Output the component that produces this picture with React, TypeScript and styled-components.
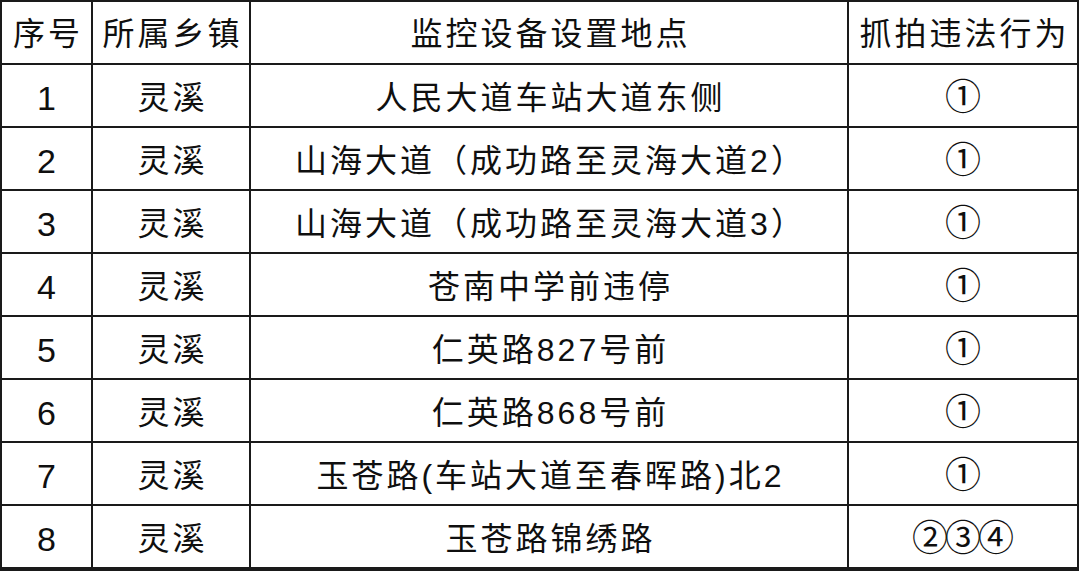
import React from 'react';
import styled, { createGlobalStyle } from 'styled-components';

const GlobalStyle = createGlobalStyle`
  html, body {
    margin: 0;
    padding: 0;
    background: #ffffff;
  }
  body {
    font-family: "Liberation Sans", "Noto Sans CJK SC", sans-serif;
    color: #0f0f0f;
  }
`;

const Table_ = styled.div`
  display: grid;
  grid-template-columns: 89px 156px 596px 228px;
  grid-auto-rows: 61px;
  gap: 2px;
  width: 1079px;
  padding: 2px 2px 4px 2px;
  box-sizing: border-box;
  background: #1a1a1a;
`;

type Kind = 'head' | 'num' | 'text' | 'mark';

const Cell_ = styled.div<{ $kind: Kind }>`
  display: flex;
  align-items: center;
  justify-content: center;
  background: #ffffff;
  font-size: ${(p) => (p.$kind === 'num' ? '34px' : p.$kind === 'mark' ? '36px' : '32px')};
  letter-spacing: ${(p) => (p.$kind === 'num' ? '0' : p.$kind === 'mark' ? '-3px' : '3px')};
  text-indent: ${(p) => (p.$kind === 'num' ? '0' : p.$kind === 'mark' ? '-3px' : '3px')};
  padding-top: ${(p) => (p.$kind === 'head' ? '2px' : p.$kind === 'mark' ? '4px' : '5px')};
  box-sizing: border-box;
  white-space: nowrap;
  line-height: 1;
`;

const headers = ['序号', '所属乡镇', '监控设备设置地点', '抓拍违法行为'];

const rows: [string, string, string, string][] = [
  ['1', '灵溪', '人民大道车站大道东侧', '①'],
  ['2', '灵溪', '山海大道（成功路至灵海大道2）', '①'],
  ['3', '灵溪', '山海大道（成功路至灵海大道3）', '①'],
  ['4', '灵溪', '苍南中学前违停', '①'],
  ['5', '灵溪', '仁英路827号前', '①'],
  ['6', '灵溪', '仁英路868号前', '①'],
  ['7', '灵溪', '玉苍路(车站大道至春晖路)北2', '①'],
  ['8', '灵溪', '玉苍路锦绣路', '②③④'],
];

const kinds: Kind[] = ['num', 'text', 'text', 'mark'];

const App = () => (
  <>
    <GlobalStyle />
    <Table_>
      {headers.map((h) => (
        <Cell_ key={h} $kind="head">
          {h}
        </Cell_>
      ))}
      {rows.map((r) =>
        r.map((c, i) => (
          <Cell_ key={r[0] + '-' + i} $kind={kinds[i]}>
            {c}
          </Cell_>
        ))
      )}
    </Table_>
  </>
);

export default App;
